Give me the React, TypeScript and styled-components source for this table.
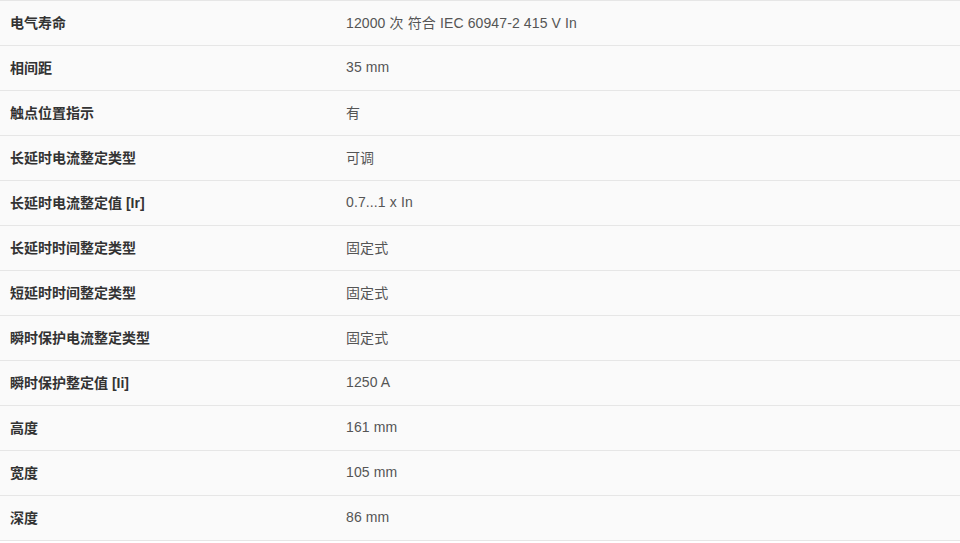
import React from "react";
import styled, { createGlobalStyle } from "styled-components";

const GlobalStyle = createGlobalStyle`
  body {
    margin: 0;
    background: #ffffff;
    font-family: "Liberation Sans", Arial, "Noto Sans CJK SC", sans-serif;
  }
`;

const Table = styled.div`
  width: 960px;
  background: #fafafa;
  border-bottom: 1px solid #e6e6e6;
`;

const Row = styled.div`
  display: grid;
  grid-template-columns: 336px 1fr;
  align-items: center;
  height: 42px;
  padding-bottom: 2px;
  border-top: 1px solid #e6e6e6;
`;

const Label = styled.div`
  padding-left: 10px;
  font-size: 14px;
  font-weight: bold;
  color: #333333;
`;

const Value = styled.div`
  padding-left: 10px;
  font-size: 14px;
  letter-spacing: 0.12px;
  color: #555555;
`;

const specs: [string, string][] = [
  ["电气寿命", "12000 次 符合 IEC 60947-2 415 V In"],
  ["相间距", "35 mm"],
  ["触点位置指示", "有"],
  ["长延时电流整定类型", "可调"],
  ["长延时电流整定值 [Ir]", "0.7...1 x In"],
  ["长延时时间整定类型", "固定式"],
  ["短延时时间整定类型", "固定式"],
  ["瞬时保护电流整定类型", "固定式"],
  ["瞬时保护整定值 [Ii]", "1250 A"],
  ["高度", "161 mm"],
  ["宽度", "105 mm"],
  ["深度", "86 mm"],
];

const App = () => {
  return (
    <>
      <GlobalStyle />
      <Table>
        {specs.map(([label, value]) => (
          <Row key={label}>
            <Label>{label}</Label>
            <Value>{value}</Value>
          </Row>
        ))}
      </Table>
    </>
  );
};

export default App;
